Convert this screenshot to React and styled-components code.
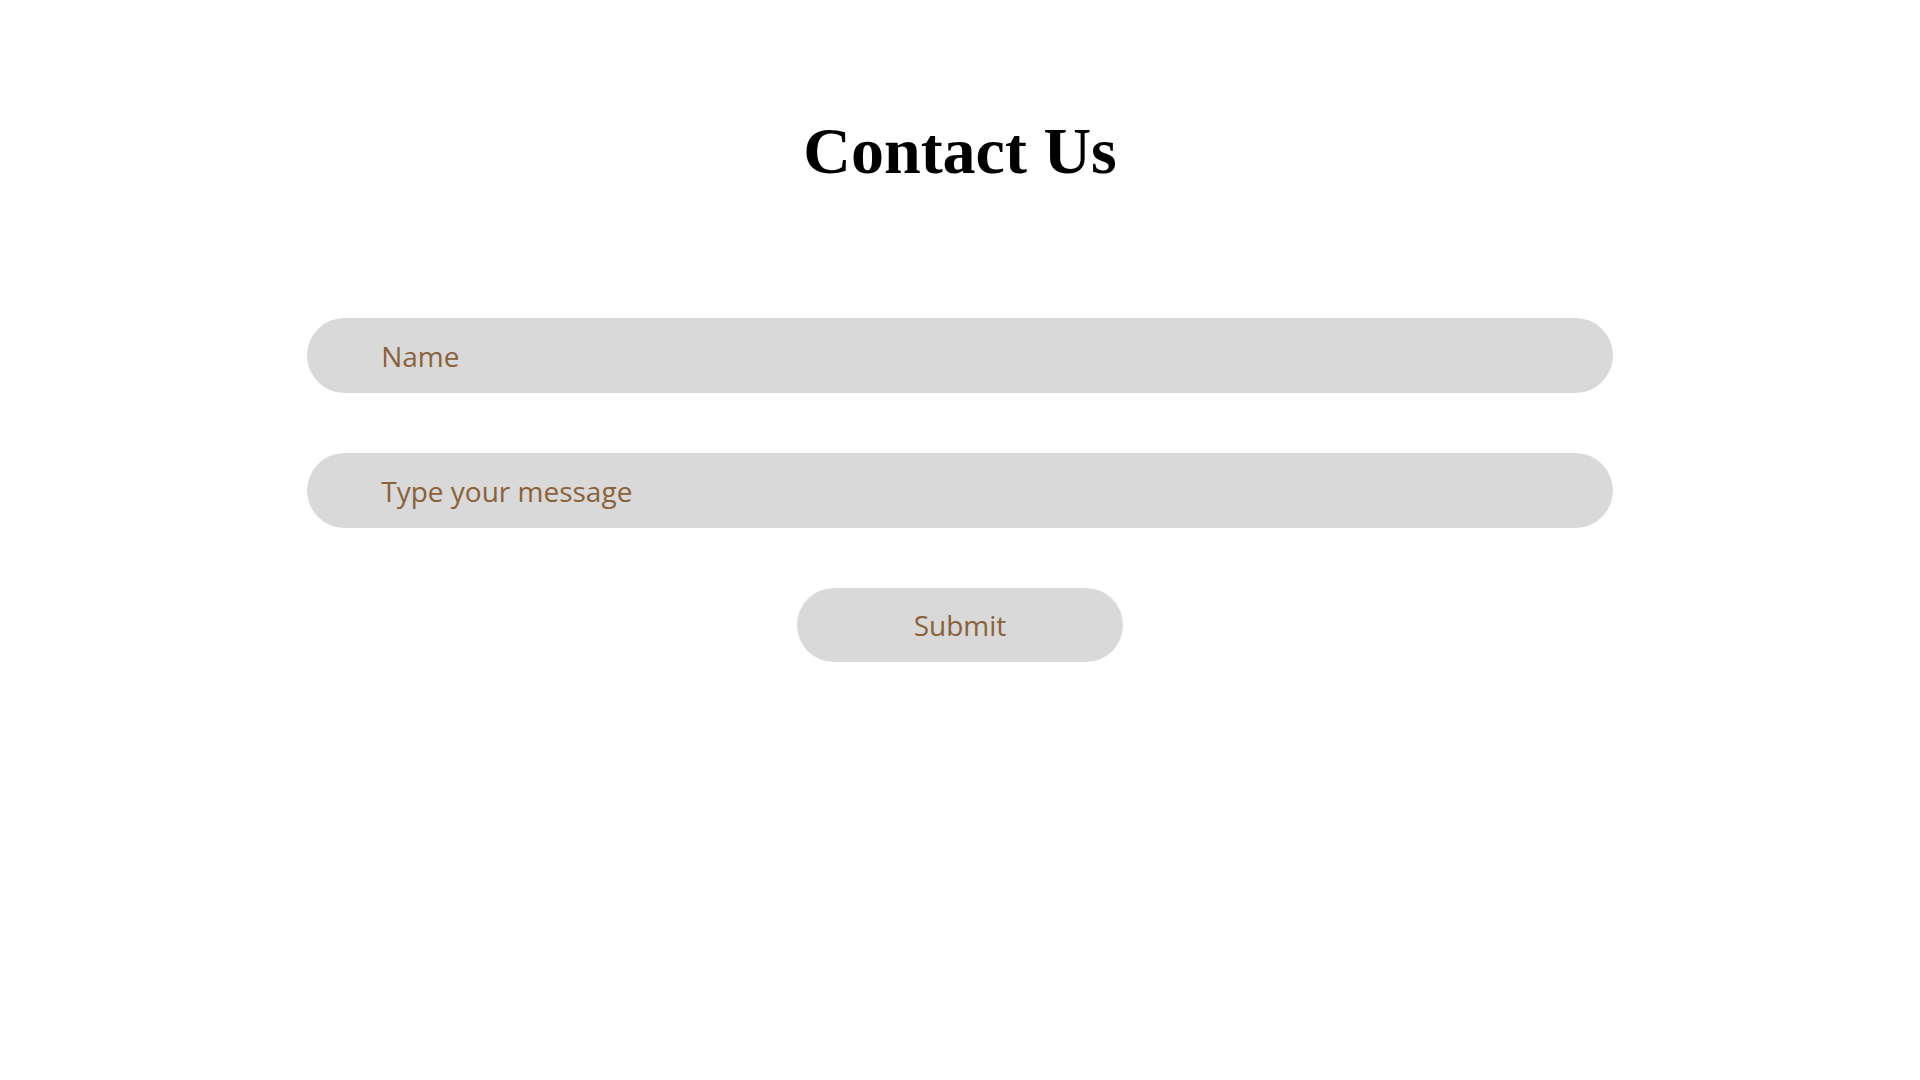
import React from 'react'
import styled, { createGlobalStyle } from 'styled-components';

const GlobalStyle = createGlobalStyle`
    html, body {
        margin: 0;
        padding: 0;
        background: #ffffff;
    }
    * {
        box-sizing: border-box;
    }
`;

const Container = styled.div`
    width: 100%;
    min-height: 100vh;
    display: flex;
    flex-direction: column;
    align-items: center;
    padding-top: 118px;
`;

const Title = styled.h1`
    margin: 0;
    font-family: "Liberation Serif", "Times New Roman", serif;
    font-weight: 700;
    font-size: 66px;
    line-height: 66px;
    color: #000000;
`;

const Form = styled.form`
    width: 100%;
    margin-top: 134px;
    display: flex;
    flex-direction: column;
    align-items: center;
    gap: 60px;
`;

const Input = styled.input`
    width: 68%;
    height: 75px;
    border: none;
    outline: none;
    border-radius: 38px;
    background-color: #d9d9d9;
    padding: 0 74px;
    font-family: "Open Sans", "Noto Sans", sans-serif;
    font-size: 28px;
    color: #8a6239;

    &::placeholder {
        color: #8a6239;
        opacity: 1;
    }
`;

const Button = styled.button`
    width: 17%;
    height: 74px;
    border: none;
    border-radius: 38px;
    background-color: #d9d9d9;
    color: #8a6239;
    font-family: "Open Sans", "Noto Sans", sans-serif;
    font-size: 28px;
    cursor: pointer;
`;

export const App = () => {
    return (
        <Container>
            <GlobalStyle />
            <Title>Contact Us</Title>
            <Form onSubmit={(e) => e.preventDefault()}>
                <Input type="text" placeholder="Name" />
                <Input type="text" placeholder="Type your message" />
                <Button type="submit">Submit</Button>
            </Form>
        </Container>
    )
}

export default App
